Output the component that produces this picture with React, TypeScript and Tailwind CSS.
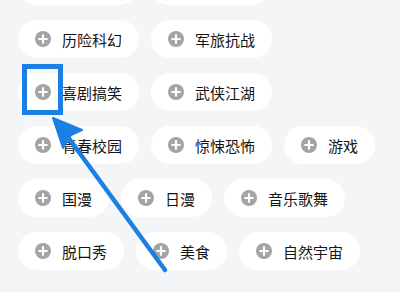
import { FC } from "react";

const rows: string[] = [
  "历险科幻",
  "军旅抗战",
  "喜剧搞笑",
  "武侠江湖",
  "青春校园",
  "惊悚恐怖",
  "游戏",
  "国漫",
  "日漫",
  "音乐歌舞",
  "脱口秀",
  "美食",
  "自然宇宙",
];

const PlusIcon: FC = () => (
  <span className="w-4 h-4 rounded-full bg-[#a3a3a8] flex items-center justify-center shrink-0">
    <svg width="10" height="10" viewBox="0 0 10 10">
      <path d="M5 1.2V8.8M1.2 5H8.8" stroke="#fff" strokeWidth="2.2" strokeLinecap="round" />
    </svg>
  </span>
);

const Tag: FC<{ label: string }> = ({ label }) => (
  <div className="h-[38px] rounded-full bg-white pl-[17px] pr-[17px] flex items-center gap-[11px]">
    <PlusIcon />
    <span className="text-[15px] leading-none text-[#141414] whitespace-nowrap">{label}</span>
  </div>
);

// blue annotation drawn over the list
const Annotation: FC = () => (
  <svg className="absolute inset-0 pointer-events-none" width="400" height="292" viewBox="0 0 400 292">
    <rect x="24.5" y="66.5" width="36" height="46" fill="none" stroke="#1b7fe3" strokeWidth="5" />
    <line x1="165" y1="270" x2="62" y2="129" stroke="#1b7fe3" strokeWidth="4.5" strokeLinecap="round" />
    <path d="M53 118 L82 130 L71 135 L63 148 Z" fill="#1b7fe3" stroke="#1b7fe3" strokeWidth="2" strokeLinejoin="round" />
  </svg>
);

const App: FC = () => {
  return (
    <div
      className="relative w-[400px] h-[292px] overflow-hidden bg-[#f4f5f7]"
      style={{ fontFamily: '"Noto Sans CJK SC", "Noto Sans", sans-serif' }}
    >
      {/* bottom of the previous row, scrolled mostly out of view */}
      <div className="flex gap-3 pl-[18px] mt-[-33px] mb-[15px]">
        <div className="h-[38px] w-[120px] rounded-full bg-white" />
        <div className="h-[38px] w-[120px] rounded-full bg-white" />
      </div>
      <div className="flex flex-wrap gap-x-3 gap-y-[15px] pl-[18px] pr-[10px]">
        {rows.map((r) => (
          <Tag key={r} label={r} />
        ))}
      </div>
      <Annotation />
    </div>
  );
};

export default App;
